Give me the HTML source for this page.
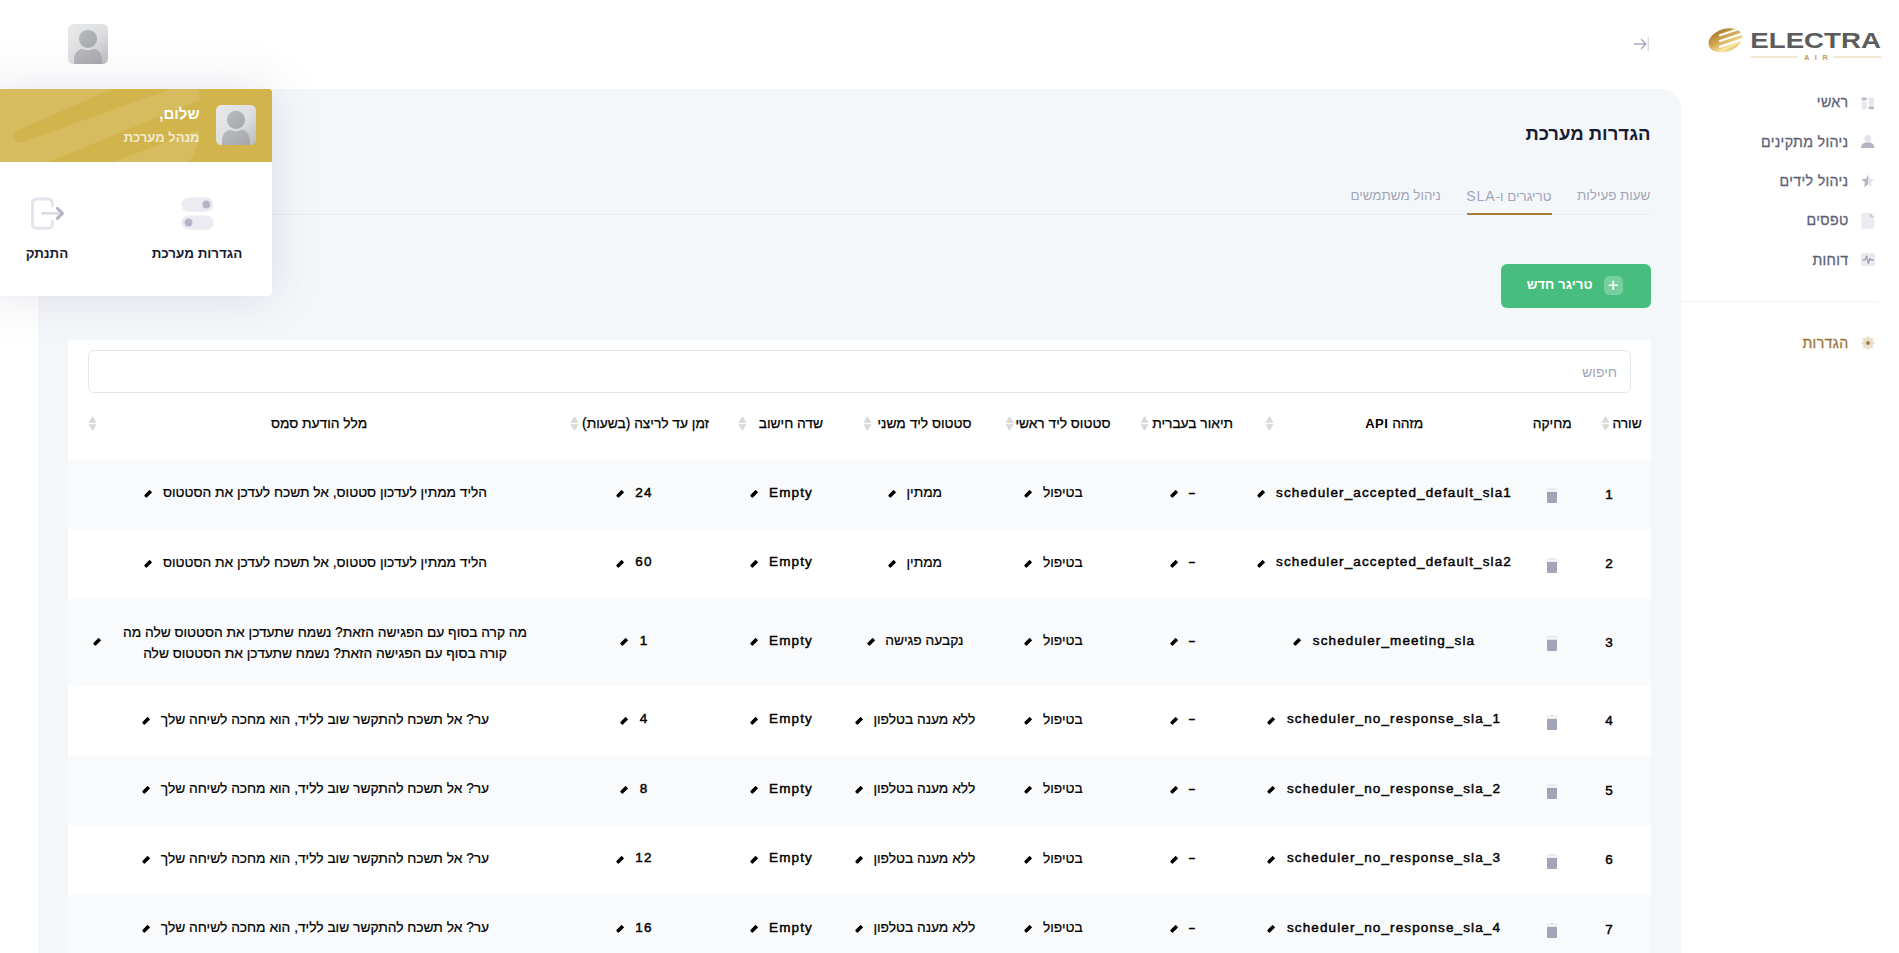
<!DOCTYPE html>
<html lang="he" dir="rtl">
<head>
<meta charset="utf-8">
<title>הגדרות מערכת</title>
<style>
*{box-sizing:border-box;margin:0;padding:0}
html,body{width:1899px;height:953px;overflow:hidden;background:#fff}
body{font-family:"Liberation Sans",sans-serif;font-size:13px;color:#000;position:relative;direction:rtl}
.abs{position:absolute}
.t{position:absolute;white-space:nowrap;line-height:20px;height:20px}
/* content area */
#content{position:absolute;left:38px;top:89px;width:1643px;height:900px;background:#f4f7fa;border-radius:20px 20px 0 0}
#card{position:absolute;left:68px;top:340px;width:1583px;height:640px;background:#fff}
#search{position:absolute;left:88px;top:350px;width:1542.5px;height:42.5px;border:1px solid #e4e6ef;border-radius:6px;background:#fff}
.row{position:absolute;left:68px;width:1583px}
.row.s{background:#f9fafb}
.c{position:absolute;width:500px;white-space:nowrap;line-height:20px;height:20px;color:#000;text-align:center}
.c .tx{position:relative;display:inline-block}
.heb{font-size:13.75px;-webkit-text-stroke:.2px #000}
.lat{font-weight:400;font-size:13.5px;letter-spacing:1.12px;-webkit-text-stroke:.45px #000}
.num{font-weight:400}
.pen{position:absolute;width:8px;height:8px;left:-18.5px;top:7.5px}
.lat .pen{left:-19.5px}
.heb .pen{top:6.9px}
.trash{display:block;width:14px;height:16px}
.sort{position:absolute;width:9px;height:15px;top:416px}
.h{position:absolute;white-space:nowrap;line-height:20px;height:20px;font-size:13.75px;color:#000;top:414px;-webkit-text-stroke:.25px #000}
/* sidebar */
.m{position:absolute;white-space:nowrap;line-height:20px;height:20px;font-size:14.200px;color:#5e6278;right:50.500px;letter-spacing:.35px;-webkit-text-stroke:.3px currentColor}
/* dropdown */
#dd{position:absolute;left:-10px;top:89px;width:282px;height:207px;background:#fff;border-radius:4px;box-shadow:0 0 50px 0 rgba(82,63,105,.15);overflow:hidden}
#ddh{position:absolute;left:0;top:0;width:282px;height:73px;background:#d4b54e;overflow:hidden}
</style>
</head>
<body>

<!-- top header -->
<svg class="abs" style="left:68px;top:24px" width="40" height="40" viewBox="0 0 40 40">
  <defs><linearGradient id="avg" x1="0" y1="0" x2="1" y2="1"><stop offset="0" stop-color="#e8e9eb"/><stop offset=".55" stop-color="#dddee0"/><stop offset="1" stop-color="#babbc0"/></linearGradient>
  <linearGradient id="avb" x1="0" y1="0" x2="1" y2="1"><stop offset="0" stop-color="#b9babe"/><stop offset="1" stop-color="#a6a7ac"/></linearGradient>
  <clipPath id="avc"><rect width="40" height="40" rx="5.500"/></clipPath></defs>
  <g clip-path="url(#avc)"><rect width="40" height="40" fill="url(#avg)"/>
  <circle cx="20" cy="14.800" r="9.100" fill="url(#avb)"/><path d="M6 41v-5c0-7 3.800-10.800 8.800-11.300 1.500 1 3.300 1.500 5.200 1.500s3.700-.5 5.200-1.500c5 .5 8.800 4.300 8.800 11.300v5z" fill="url(#avb)"/></g>
</svg>
<svg class="abs" style="left:1633px;top:36px" width="18" height="16" viewBox="0 0 18 16" fill="none">
  <path d="M1.5 8h11M8.5 3.6l4.4 4.4-4.4 4.4" stroke="#a6a9bb" stroke-width="1.400" stroke-linecap="round" stroke-linejoin="round"/>
  <path d="M15.3 1.5v13" stroke="#dcdde6" stroke-width="1.6" stroke-linecap="round"/>
</svg>

<!-- logo -->
<svg class="abs" style="left:1700px;top:20px;direction:ltr" width="190" height="50" viewBox="1700 20 190 50" direction="ltr">
  <defs><linearGradient id="lg" x1="0.25" y1="0" x2="0.55" y2="1"><stop offset="0" stop-color="#a97a2c"/><stop offset="0.5" stop-color="#d5ad58"/><stop offset="0.85" stop-color="#fbe8a2"/><stop offset="1" stop-color="#e2c06c"/></linearGradient></defs>
  <g transform="translate(1725.400 40.200) rotate(-18.300)">
    <ellipse cx="0" cy="0" rx="17.400" ry="11.300" fill="url(#lg)"/>
    <g stroke="#fff" stroke-width="2.200" stroke-linecap="round" fill="none">
      <path d="M-3.600 -6.400H22"/><path d="M-5.400 -1H22"/><path d="M-7.200 4.600H22"/>
    </g>
  </g>
  <text x="1750.300" y="48" font-family="Liberation Sans, sans-serif" font-weight="700" font-size="21.400" fill="#5c5c5c" textLength="130.700" lengthAdjust="spacingAndGlyphs" direction="ltr" text-anchor="start">ELECTRA</text>
  <rect x="1750.300" y="56.500" width="47.700" height="1" fill="#e6cfa0"/>
  <rect x="1833" y="56.500" width="48" height="1" fill="#e6cfa0"/>
  <text x="1803.900" y="59.700" font-family="Liberation Sans, sans-serif" font-weight="700" font-size="7.500" fill="#c69a48" textLength="23.900" lengthAdjust="spacing" direction="ltr" text-anchor="start">AIR</text>
</svg>

<!-- sidebar menu -->
<div class="m" style="top:91.800px">ראשי</div>
<div class="m" style="top:132px">ניהול מתקינים</div>
<div class="m" style="top:171px">ניהול לידים</div>
<div class="m" style="top:210px">טפסים</div>
<div class="m" style="top:250px">דוחות</div>
<div class="abs" style="left:1681px;top:301px;width:197px;height:1px;background:#eff2f5"></div>
<div class="m" style="top:333px;color:#9c7636">הגדרות</div>


<!-- sidebar icons -->
<svg class="abs" style="left:1861px;top:96.5px" width="14" height="13" viewBox="0 0 14 13">
  <rect x=".7" y=".5" width="5" height="3" rx=".8" fill="#b9b9c9"/>
  <rect x=".7" y="4.5" width="5" height="7.7" rx=".8" fill="#e6e6ee"/>
  <rect x="7.6" y=".5" width="5.4" height="7.7" rx=".8" fill="#e6e6ee"/>
  <rect x="7.6" y="9.3" width="5.4" height="2.9" rx=".8" fill="#b9b9c9"/>
</svg>
<svg class="abs" style="left:1860px;top:134px" width="16" height="16" viewBox="0 0 16 16">
  <circle cx="7.7" cy="4.4" r="3.3" fill="#e4e4ec"/>
  <path d="M1 13.4C1.3 9.9 4 8.2 7.7 8.2s6.4 1.7 6.7 5.2c0 .4-.2.6-.6.6H1.6c-.4 0-.6-.2-.6-.6z" fill="#b5b5c3"/>
</svg>
<svg class="abs" style="left:1860.6px;top:174.4px" width="14" height="14" viewBox="0 0 14 14">
  <path d="M7 .6 8.9 4.8 13.4 5.3 10 8.4 11 12.9 7 10.6z" fill="#e4e4ec"/>
  <path d="M7 .6 5.1 4.8 .6 5.3 4 8.4 3 12.9 7 10.6z" fill="#b5b5c3"/>
</svg>
<svg class="abs" style="left:1861px;top:212.8px" width="14" height="16" viewBox="0 0 14 16">
  <path d="M2.400 0H9l4.300 4.300v9.200c0 1.400-1 2.400-2.400 2.400H2.400C1 15.900.1 14.900.1 13.500V2.400C.1 1 1 0 2.400 0z" fill="#ebebf2"/>
  <path d="M9 0l4.300 4.300H10.200C9.500 4.300 9 3.800 9 3.100z" fill="#c3c3d1"/>
</svg>
<svg class="abs" style="left:1860.800px;top:253.200px" width="14.400" height="13.200" viewBox="0 0 14.400 13.200">
  <rect width="14.400" height="13.200" rx="1.600" fill="#e9e9f0"/>
  <path d="M1.500 6.900H4.300L5.600 3 7.400 10.400 8.900 5.400 9.800 6.900H13" fill="none" stroke="#9a9bb0" stroke-width="1.250" stroke-linejoin="round"/>
</svg>
<svg class="abs" style="left:1860.500px;top:335.800px" width="14" height="14" viewBox="-7 -7 14 14">
  <g fill="#eadfce"><circle r="5"/>
  <g id="tth"><rect x="-1.500" y="-6.700" width="3" height="13.400" rx="1.200"/></g>
  <use href="#tth" transform="rotate(45)"/><use href="#tth" transform="rotate(90)"/><use href="#tth" transform="rotate(135)"/></g>
  <circle r="1.900" fill="#a67c3a"/>
</svg>

<!-- content -->
<div id="content"></div>
<div class="t" style="right:248.5px;top:123px;font-size:18.500px;font-weight:700;color:#181c32;line-height:22px;height:22px">הגדרות מערכת</div>

<div class="abs" style="left:68px;top:213.5px;width:1583px;height:1px;background:#e8ecf0"></div>
<div class="t" style="right:248.600px;top:186.300px;font-size:13.400px;color:#a1a5b7">שעות פעילות</div>
<div class="t" style="right:347.500px;top:186.300px;font-size:13.400px;color:#a1a5b7" dir="rtl">טריגרים ו-<span style="letter-spacing:1px;font-size:14px">SLA</span></div>
<div class="abs" style="left:1467px;top:213px;width:85px;height:2px;background:#a67c3a"></div>
<div class="t" style="right:458.200px;top:186.300px;font-size:13.400px;color:#a1a5b7">ניהול משתמשים</div>

<div class="abs" style="left:1501px;top:264px;width:150px;height:44px;background:#47be7d;border-radius:6px"></div>
<div class="abs" style="left:1604px;top:276px;width:18.5px;height:18.5px;background:#77cf9f;border-radius:5.5px"></div>
<svg class="abs" style="left:1604px;top:276px" width="18.5" height="18.5" viewBox="0 0 18.5 18.5"><path d="M9.25 5.300v7.900M5.300 9.250h7.900" stroke="#fff" stroke-width="1.700" stroke-linecap="round"/></svg>
<div class="t" style="right:306.500px;top:275px;font-size:13.250px;font-weight:700;color:#fff">טריגר חדש</div>

<div id="card"></div>
<div id="search"></div>
<div class="t" style="right:282px;top:361.5px;font-size:14px;color:#a1a5b7">חיפוש</div>

<div id="thead">
<div class="h" style="right:257.3px">שורה</div>
<svg class="sort" style="left:1600.6px" viewBox="0 0 9 15"><path d="M4.5 0 8.6 6.7H.4z" fill="#d9d9d9"/><path d="M4.5 15 8.6 8.3H.4z" fill="#d9d9d9"/></svg>
<div class="h" style="right:327.3px">מחיקה</div>
<div class="h" style="right:475.8px">מזהה <b style="font-size:13px;letter-spacing:.5px;-webkit-text-stroke:0">API</b></div>
<svg class="sort" style="left:1264.9px" viewBox="0 0 9 15"><path d="M4.5 0 8.6 6.7H.4z" fill="#d9d9d9"/><path d="M4.5 15 8.6 8.3H.4z" fill="#d9d9d9"/></svg>
<div class="h" style="right:666px">תיאור בעברית</div>
<svg class="sort" style="left:1139.7px" viewBox="0 0 9 15"><path d="M4.5 0 8.6 6.7H.4z" fill="#d9d9d9"/><path d="M4.5 15 8.6 8.3H.4z" fill="#d9d9d9"/></svg>
<div class="h" style="right:788.6px">סטטוס ליד ראשי</div>
<svg class="sort" style="left:1004.8px" viewBox="0 0 9 15"><path d="M4.5 0 8.6 6.7H.4z" fill="#d9d9d9"/><path d="M4.5 15 8.6 8.3H.4z" fill="#d9d9d9"/></svg>
<div class="h" style="right:927.5px">סטטוס ליד משני</div>
<svg class="sort" style="left:862.9px" viewBox="0 0 9 15"><path d="M4.5 0 8.6 6.7H.4z" fill="#d9d9d9"/><path d="M4.5 15 8.6 8.3H.4z" fill="#d9d9d9"/></svg>
<div class="h" style="right:1076px">שדה חישוב</div>
<svg class="sort" style="left:737.9px" viewBox="0 0 9 15"><path d="M4.5 0 8.6 6.7H.4z" fill="#d9d9d9"/><path d="M4.5 15 8.6 8.3H.4z" fill="#d9d9d9"/></svg>
<div class="h" style="right:1190px">זמן עד לריצה (בשעות)</div>
<svg class="sort" style="left:569.9px" viewBox="0 0 9 15"><path d="M4.5 0 8.6 6.7H.4z" fill="#d9d9d9"/><path d="M4.5 15 8.6 8.3H.4z" fill="#d9d9d9"/></svg>
<div class="h" style="right:1531.9px">מלל הודעת סמס</div>
<svg class="sort" style="left:87.9px" viewBox="0 0 9 15"><path d="M4.5 0 8.6 6.7H.4z" fill="#d9d9d9"/><path d="M4.5 15 8.6 8.3H.4z" fill="#d9d9d9"/></svg>
</div>
<div id="tbody">
<div class="row s" style="top:460px;height:69px"></div>
<div class="c lat num" style="left:1359.5px;top:484.7px"><span class="tx">1</span></div>
<div class="abs" style="left:1545px;top:487px"><svg class="trash" viewBox="0 0 14 16"><rect x="1" y="1.8" width="12" height=".9" fill="#dfe1e8"/><rect x="5.2" y=".7" width="3.6" height="1.2" rx=".6" fill="#e4e6ec"/><path d="M2 4.7h10v10.3a1 1 0 0 1-1 1H3a1 1 0 0 1-1-1z" fill="#a1a5b7"/></svg></div>
<div class="c lat" style="left:1144px;top:482.6px"><span class="tx">scheduler_accepted_default_sla1<svg class="pen" viewBox="0 0 8 8"><path transform="translate(4 4) rotate(-45)" d="M4.100-1.800V1.800H-2.600Q-4 1.800-4 .600V-.600Q-4-1.800-2.600-1.800z" fill="#000"/></svg></span></div>
<div class="c lat" style="left:942.4px;top:482.6px"><span class="tx"><span style="display:inline-block;transform:scaleX(1.6)">-</span><svg class="pen" viewBox="0 0 8 8"><path transform="translate(4 4) rotate(-45)" d="M4.100-1.800V1.800H-2.600Q-4 1.800-4 .600V-.600Q-4-1.800-2.600-1.800z" fill="#000"/></svg></span></div>
<div class="c heb" style="left:812.8px;top:483.2px"><span class="tx">בטיפול<svg class="pen" viewBox="0 0 8 8"><path transform="translate(4 4) rotate(-45)" d="M4.100-1.800V1.800H-2.600Q-4 1.800-4 .600V-.600Q-4-1.800-2.600-1.800z" fill="#000"/></svg></span></div>
<div class="c heb" style="left:674.3px;top:483.2px"><span class="tx">ממתין<svg class="pen" viewBox="0 0 8 8"><path transform="translate(4 4) rotate(-45)" d="M4.100-1.800V1.800H-2.600Q-4 1.800-4 .600V-.600Q-4-1.800-2.600-1.800z" fill="#000"/></svg></span></div>
<div class="c lat" style="left:541px;top:482.6px"><span class="tx">Empty<svg class="pen" viewBox="0 0 8 8"><path transform="translate(4 4) rotate(-45)" d="M4.100-1.800V1.800H-2.600Q-4 1.800-4 .600V-.600Q-4-1.800-2.600-1.800z" fill="#000"/></svg></span></div>
<div class="c lat" style="left:394px;top:482.6px"><span class="tx">24<svg class="pen" viewBox="0 0 8 8"><path transform="translate(4 4) rotate(-45)" d="M4.100-1.800V1.800H-2.600Q-4 1.800-4 .600V-.600Q-4-1.800-2.600-1.800z" fill="#000"/></svg></span></div>
<div class="c heb" style="left:75px;top:483.2px"><span class="tx">הליד ממתין לעדכון סטטוס, אל תשכח לעדכן את הסטטוס<svg class="pen" viewBox="0 0 8 8"><path transform="translate(4 4) rotate(-45)" d="M4.100-1.800V1.800H-2.600Q-4 1.800-4 .600V-.600Q-4-1.800-2.600-1.800z" fill="#000"/></svg></span></div>
<div class="row" style="top:529px;height:70px"></div>
<div class="c lat num" style="left:1359.5px;top:554.2px"><span class="tx">2</span></div>
<div class="abs" style="left:1545px;top:556.5px"><svg class="trash" viewBox="0 0 14 16"><rect x="1" y="1.8" width="12" height=".9" fill="#dfe1e8"/><rect x="5.2" y=".7" width="3.6" height="1.2" rx=".6" fill="#e4e6ec"/><path d="M2 4.7h10v10.3a1 1 0 0 1-1 1H3a1 1 0 0 1-1-1z" fill="#a1a5b7"/></svg></div>
<div class="c lat" style="left:1144px;top:552.1px"><span class="tx">scheduler_accepted_default_sla2<svg class="pen" viewBox="0 0 8 8"><path transform="translate(4 4) rotate(-45)" d="M4.100-1.800V1.800H-2.600Q-4 1.800-4 .600V-.600Q-4-1.800-2.600-1.800z" fill="#000"/></svg></span></div>
<div class="c lat" style="left:942.4px;top:552.1px"><span class="tx"><span style="display:inline-block;transform:scaleX(1.6)">-</span><svg class="pen" viewBox="0 0 8 8"><path transform="translate(4 4) rotate(-45)" d="M4.100-1.800V1.800H-2.600Q-4 1.800-4 .600V-.600Q-4-1.800-2.600-1.800z" fill="#000"/></svg></span></div>
<div class="c heb" style="left:812.8px;top:552.7px"><span class="tx">בטיפול<svg class="pen" viewBox="0 0 8 8"><path transform="translate(4 4) rotate(-45)" d="M4.100-1.800V1.800H-2.600Q-4 1.800-4 .600V-.600Q-4-1.800-2.600-1.800z" fill="#000"/></svg></span></div>
<div class="c heb" style="left:674.3px;top:552.7px"><span class="tx">ממתין<svg class="pen" viewBox="0 0 8 8"><path transform="translate(4 4) rotate(-45)" d="M4.100-1.800V1.800H-2.600Q-4 1.800-4 .600V-.600Q-4-1.800-2.600-1.800z" fill="#000"/></svg></span></div>
<div class="c lat" style="left:541px;top:552.1px"><span class="tx">Empty<svg class="pen" viewBox="0 0 8 8"><path transform="translate(4 4) rotate(-45)" d="M4.100-1.800V1.800H-2.600Q-4 1.800-4 .600V-.600Q-4-1.800-2.600-1.800z" fill="#000"/></svg></span></div>
<div class="c lat" style="left:394px;top:552.1px"><span class="tx">60<svg class="pen" viewBox="0 0 8 8"><path transform="translate(4 4) rotate(-45)" d="M4.100-1.800V1.800H-2.600Q-4 1.800-4 .600V-.600Q-4-1.800-2.600-1.800z" fill="#000"/></svg></span></div>
<div class="c heb" style="left:75px;top:552.7px"><span class="tx">הליד ממתין לעדכון סטטוס, אל תשכח לעדכן את הסטטוס<svg class="pen" viewBox="0 0 8 8"><path transform="translate(4 4) rotate(-45)" d="M4.100-1.800V1.800H-2.600Q-4 1.800-4 .600V-.600Q-4-1.800-2.600-1.800z" fill="#000"/></svg></span></div>
<div class="row s" style="top:599px;height:87px"></div>
<div class="c lat num" style="left:1359.5px;top:632.7px"><span class="tx">3</span></div>
<div class="abs" style="left:1545px;top:635px"><svg class="trash" viewBox="0 0 14 16"><rect x="1" y="1.8" width="12" height=".9" fill="#dfe1e8"/><rect x="5.2" y=".7" width="3.6" height="1.2" rx=".6" fill="#e4e6ec"/><path d="M2 4.7h10v10.3a1 1 0 0 1-1 1H3a1 1 0 0 1-1-1z" fill="#a1a5b7"/></svg></div>
<div class="c lat" style="left:1144px;top:630.6px"><span class="tx">scheduler_meeting_sla<svg class="pen" viewBox="0 0 8 8"><path transform="translate(4 4) rotate(-45)" d="M4.100-1.800V1.800H-2.600Q-4 1.800-4 .600V-.600Q-4-1.800-2.600-1.800z" fill="#000"/></svg></span></div>
<div class="c lat" style="left:942.4px;top:630.6px"><span class="tx"><span style="display:inline-block;transform:scaleX(1.6)">-</span><svg class="pen" viewBox="0 0 8 8"><path transform="translate(4 4) rotate(-45)" d="M4.100-1.800V1.800H-2.600Q-4 1.800-4 .600V-.600Q-4-1.800-2.600-1.800z" fill="#000"/></svg></span></div>
<div class="c heb" style="left:812.8px;top:631.2px"><span class="tx">בטיפול<svg class="pen" viewBox="0 0 8 8"><path transform="translate(4 4) rotate(-45)" d="M4.100-1.800V1.800H-2.600Q-4 1.800-4 .600V-.600Q-4-1.800-2.600-1.800z" fill="#000"/></svg></span></div>
<div class="c heb" style="left:674.3px;top:631.2px"><span class="tx">נקבעה פגישה<svg class="pen" viewBox="0 0 8 8"><path transform="translate(4 4) rotate(-45)" d="M4.100-1.800V1.800H-2.600Q-4 1.800-4 .600V-.600Q-4-1.800-2.600-1.800z" fill="#000"/></svg></span></div>
<div class="c lat" style="left:541px;top:630.6px"><span class="tx">Empty<svg class="pen" viewBox="0 0 8 8"><path transform="translate(4 4) rotate(-45)" d="M4.100-1.800V1.800H-2.600Q-4 1.800-4 .600V-.600Q-4-1.800-2.600-1.800z" fill="#000"/></svg></span></div>
<div class="c lat" style="left:394px;top:630.6px"><span class="tx">1<svg class="pen" viewBox="0 0 8 8"><path transform="translate(4 4) rotate(-45)" d="M4.100-1.800V1.800H-2.600Q-4 1.800-4 .600V-.600Q-4-1.800-2.600-1.800z" fill="#000"/></svg></span></div>
<div class="c heb" style="left:75px;top:622px;height:42px;line-height:21px"><span class="tx" style="display:inline-block">מה קרה בסוף עם הפגישה הזאת? נשמח שתעדכן את הסטטוס שלה מה<br>קורה בסוף עם הפגישה הזאת? נשמח שתעדכן את הסטטוס שלה<svg class="pen" style="top:16.400px;left:-30.200px" viewBox="0 0 8 8"><path transform="translate(4 4) rotate(-45)" d="M4.100-1.800V1.800H-2.600Q-4 1.800-4 .600V-.600Q-4-1.800-2.600-1.800z" fill="#000"/></svg></span></div>
<div class="row" style="top:686px;height:70px"></div>
<div class="c lat num" style="left:1359.5px;top:711.2px"><span class="tx">4</span></div>
<div class="abs" style="left:1545px;top:713.5px"><svg class="trash" viewBox="0 0 14 16"><rect x="1" y="1.8" width="12" height=".9" fill="#dfe1e8"/><rect x="5.2" y=".7" width="3.6" height="1.2" rx=".6" fill="#e4e6ec"/><path d="M2 4.7h10v10.3a1 1 0 0 1-1 1H3a1 1 0 0 1-1-1z" fill="#a1a5b7"/></svg></div>
<div class="c lat" style="left:1144px;top:709.1px"><span class="tx">scheduler_no_response_sla_1<svg class="pen" viewBox="0 0 8 8"><path transform="translate(4 4) rotate(-45)" d="M4.100-1.800V1.800H-2.600Q-4 1.800-4 .600V-.600Q-4-1.800-2.600-1.800z" fill="#000"/></svg></span></div>
<div class="c lat" style="left:942.4px;top:709.1px"><span class="tx"><span style="display:inline-block;transform:scaleX(1.6)">-</span><svg class="pen" viewBox="0 0 8 8"><path transform="translate(4 4) rotate(-45)" d="M4.100-1.800V1.800H-2.600Q-4 1.800-4 .600V-.600Q-4-1.800-2.600-1.800z" fill="#000"/></svg></span></div>
<div class="c heb" style="left:812.8px;top:709.7px"><span class="tx">בטיפול<svg class="pen" viewBox="0 0 8 8"><path transform="translate(4 4) rotate(-45)" d="M4.100-1.800V1.800H-2.600Q-4 1.800-4 .600V-.600Q-4-1.800-2.600-1.800z" fill="#000"/></svg></span></div>
<div class="c heb" style="left:674.3px;top:709.7px"><span class="tx">ללא מענה בטלפון<svg class="pen" viewBox="0 0 8 8"><path transform="translate(4 4) rotate(-45)" d="M4.100-1.800V1.800H-2.600Q-4 1.800-4 .600V-.600Q-4-1.800-2.600-1.800z" fill="#000"/></svg></span></div>
<div class="c lat" style="left:541px;top:709.1px"><span class="tx">Empty<svg class="pen" viewBox="0 0 8 8"><path transform="translate(4 4) rotate(-45)" d="M4.100-1.800V1.800H-2.600Q-4 1.800-4 .600V-.600Q-4-1.800-2.600-1.800z" fill="#000"/></svg></span></div>
<div class="c lat" style="left:394px;top:709.1px"><span class="tx">4<svg class="pen" viewBox="0 0 8 8"><path transform="translate(4 4) rotate(-45)" d="M4.100-1.800V1.800H-2.600Q-4 1.800-4 .600V-.600Q-4-1.800-2.600-1.800z" fill="#000"/></svg></span></div>
<div class="c heb" style="left:75px;top:709.7px"><span class="tx">ער? אל תשכח להתקשר שוב לליד, הוא מחכה לשיחה שלך<svg class="pen" viewBox="0 0 8 8"><path transform="translate(4 4) rotate(-45)" d="M4.100-1.800V1.800H-2.600Q-4 1.800-4 .600V-.600Q-4-1.800-2.600-1.800z" fill="#000"/></svg></span></div>
<div class="row s" style="top:756px;height:69px"></div>
<div class="c lat num" style="left:1359.5px;top:780.7px"><span class="tx">5</span></div>
<div class="abs" style="left:1545px;top:783px"><svg class="trash" viewBox="0 0 14 16"><rect x="1" y="1.8" width="12" height=".9" fill="#dfe1e8"/><rect x="5.2" y=".7" width="3.6" height="1.2" rx=".6" fill="#e4e6ec"/><path d="M2 4.7h10v10.3a1 1 0 0 1-1 1H3a1 1 0 0 1-1-1z" fill="#a1a5b7"/></svg></div>
<div class="c lat" style="left:1144px;top:778.6px"><span class="tx">scheduler_no_response_sla_2<svg class="pen" viewBox="0 0 8 8"><path transform="translate(4 4) rotate(-45)" d="M4.100-1.800V1.800H-2.600Q-4 1.800-4 .600V-.600Q-4-1.800-2.600-1.800z" fill="#000"/></svg></span></div>
<div class="c lat" style="left:942.4px;top:778.6px"><span class="tx"><span style="display:inline-block;transform:scaleX(1.6)">-</span><svg class="pen" viewBox="0 0 8 8"><path transform="translate(4 4) rotate(-45)" d="M4.100-1.800V1.800H-2.600Q-4 1.800-4 .600V-.600Q-4-1.800-2.600-1.800z" fill="#000"/></svg></span></div>
<div class="c heb" style="left:812.8px;top:779.2px"><span class="tx">בטיפול<svg class="pen" viewBox="0 0 8 8"><path transform="translate(4 4) rotate(-45)" d="M4.100-1.800V1.800H-2.600Q-4 1.800-4 .600V-.600Q-4-1.800-2.600-1.800z" fill="#000"/></svg></span></div>
<div class="c heb" style="left:674.3px;top:779.2px"><span class="tx">ללא מענה בטלפון<svg class="pen" viewBox="0 0 8 8"><path transform="translate(4 4) rotate(-45)" d="M4.100-1.800V1.800H-2.600Q-4 1.800-4 .600V-.600Q-4-1.800-2.600-1.800z" fill="#000"/></svg></span></div>
<div class="c lat" style="left:541px;top:778.6px"><span class="tx">Empty<svg class="pen" viewBox="0 0 8 8"><path transform="translate(4 4) rotate(-45)" d="M4.100-1.800V1.800H-2.600Q-4 1.800-4 .600V-.600Q-4-1.800-2.600-1.800z" fill="#000"/></svg></span></div>
<div class="c lat" style="left:394px;top:778.6px"><span class="tx">8<svg class="pen" viewBox="0 0 8 8"><path transform="translate(4 4) rotate(-45)" d="M4.100-1.800V1.800H-2.600Q-4 1.800-4 .600V-.600Q-4-1.800-2.600-1.800z" fill="#000"/></svg></span></div>
<div class="c heb" style="left:75px;top:779.2px"><span class="tx">ער? אל תשכח להתקשר שוב לליד, הוא מחכה לשיחה שלך<svg class="pen" viewBox="0 0 8 8"><path transform="translate(4 4) rotate(-45)" d="M4.100-1.800V1.800H-2.600Q-4 1.800-4 .600V-.600Q-4-1.800-2.600-1.800z" fill="#000"/></svg></span></div>
<div class="row" style="top:825px;height:70px"></div>
<div class="c lat num" style="left:1359.5px;top:850.2px"><span class="tx">6</span></div>
<div class="abs" style="left:1545px;top:852.5px"><svg class="trash" viewBox="0 0 14 16"><rect x="1" y="1.8" width="12" height=".9" fill="#dfe1e8"/><rect x="5.2" y=".7" width="3.6" height="1.2" rx=".6" fill="#e4e6ec"/><path d="M2 4.7h10v10.3a1 1 0 0 1-1 1H3a1 1 0 0 1-1-1z" fill="#a1a5b7"/></svg></div>
<div class="c lat" style="left:1144px;top:848.1px"><span class="tx">scheduler_no_response_sla_3<svg class="pen" viewBox="0 0 8 8"><path transform="translate(4 4) rotate(-45)" d="M4.100-1.800V1.800H-2.600Q-4 1.800-4 .600V-.600Q-4-1.800-2.600-1.800z" fill="#000"/></svg></span></div>
<div class="c lat" style="left:942.4px;top:848.1px"><span class="tx"><span style="display:inline-block;transform:scaleX(1.6)">-</span><svg class="pen" viewBox="0 0 8 8"><path transform="translate(4 4) rotate(-45)" d="M4.100-1.800V1.800H-2.600Q-4 1.800-4 .600V-.600Q-4-1.800-2.600-1.800z" fill="#000"/></svg></span></div>
<div class="c heb" style="left:812.8px;top:848.7px"><span class="tx">בטיפול<svg class="pen" viewBox="0 0 8 8"><path transform="translate(4 4) rotate(-45)" d="M4.100-1.800V1.800H-2.600Q-4 1.800-4 .600V-.600Q-4-1.800-2.600-1.800z" fill="#000"/></svg></span></div>
<div class="c heb" style="left:674.3px;top:848.7px"><span class="tx">ללא מענה בטלפון<svg class="pen" viewBox="0 0 8 8"><path transform="translate(4 4) rotate(-45)" d="M4.100-1.800V1.800H-2.600Q-4 1.800-4 .600V-.600Q-4-1.800-2.600-1.800z" fill="#000"/></svg></span></div>
<div class="c lat" style="left:541px;top:848.1px"><span class="tx">Empty<svg class="pen" viewBox="0 0 8 8"><path transform="translate(4 4) rotate(-45)" d="M4.100-1.800V1.800H-2.600Q-4 1.800-4 .600V-.600Q-4-1.800-2.600-1.800z" fill="#000"/></svg></span></div>
<div class="c lat" style="left:394px;top:848.1px"><span class="tx">12<svg class="pen" viewBox="0 0 8 8"><path transform="translate(4 4) rotate(-45)" d="M4.100-1.800V1.800H-2.600Q-4 1.800-4 .600V-.600Q-4-1.800-2.600-1.800z" fill="#000"/></svg></span></div>
<div class="c heb" style="left:75px;top:848.7px"><span class="tx">ער? אל תשכח להתקשר שוב לליד, הוא מחכה לשיחה שלך<svg class="pen" viewBox="0 0 8 8"><path transform="translate(4 4) rotate(-45)" d="M4.100-1.800V1.800H-2.600Q-4 1.800-4 .600V-.600Q-4-1.800-2.600-1.800z" fill="#000"/></svg></span></div>
<div class="row s" style="top:895px;height:69px"></div>
<div class="c lat num" style="left:1359.5px;top:919.7px"><span class="tx">7</span></div>
<div class="abs" style="left:1545px;top:922px"><svg class="trash" viewBox="0 0 14 16"><rect x="1" y="1.8" width="12" height=".9" fill="#dfe1e8"/><rect x="5.2" y=".7" width="3.6" height="1.2" rx=".6" fill="#e4e6ec"/><path d="M2 4.7h10v10.3a1 1 0 0 1-1 1H3a1 1 0 0 1-1-1z" fill="#a1a5b7"/></svg></div>
<div class="c lat" style="left:1144px;top:917.6px"><span class="tx">scheduler_no_response_sla_4<svg class="pen" viewBox="0 0 8 8"><path transform="translate(4 4) rotate(-45)" d="M4.100-1.800V1.800H-2.600Q-4 1.800-4 .600V-.600Q-4-1.800-2.600-1.800z" fill="#000"/></svg></span></div>
<div class="c lat" style="left:942.4px;top:917.6px"><span class="tx"><span style="display:inline-block;transform:scaleX(1.6)">-</span><svg class="pen" viewBox="0 0 8 8"><path transform="translate(4 4) rotate(-45)" d="M4.100-1.800V1.800H-2.600Q-4 1.800-4 .600V-.600Q-4-1.800-2.600-1.800z" fill="#000"/></svg></span></div>
<div class="c heb" style="left:812.8px;top:918.2px"><span class="tx">בטיפול<svg class="pen" viewBox="0 0 8 8"><path transform="translate(4 4) rotate(-45)" d="M4.100-1.800V1.800H-2.600Q-4 1.800-4 .600V-.600Q-4-1.800-2.600-1.800z" fill="#000"/></svg></span></div>
<div class="c heb" style="left:674.3px;top:918.2px"><span class="tx">ללא מענה בטלפון<svg class="pen" viewBox="0 0 8 8"><path transform="translate(4 4) rotate(-45)" d="M4.100-1.800V1.800H-2.600Q-4 1.800-4 .600V-.600Q-4-1.800-2.600-1.800z" fill="#000"/></svg></span></div>
<div class="c lat" style="left:541px;top:917.6px"><span class="tx">Empty<svg class="pen" viewBox="0 0 8 8"><path transform="translate(4 4) rotate(-45)" d="M4.100-1.800V1.800H-2.600Q-4 1.800-4 .600V-.600Q-4-1.800-2.600-1.800z" fill="#000"/></svg></span></div>
<div class="c lat" style="left:394px;top:917.6px"><span class="tx">16<svg class="pen" viewBox="0 0 8 8"><path transform="translate(4 4) rotate(-45)" d="M4.100-1.800V1.800H-2.600Q-4 1.800-4 .600V-.600Q-4-1.800-2.600-1.800z" fill="#000"/></svg></span></div>
<div class="c heb" style="left:75px;top:918.2px"><span class="tx">ער? אל תשכח להתקשר שוב לליד, הוא מחכה לשיחה שלך<svg class="pen" viewBox="0 0 8 8"><path transform="translate(4 4) rotate(-45)" d="M4.100-1.800V1.800H-2.600Q-4 1.800-4 .600V-.600Q-4-1.800-2.600-1.800z" fill="#000"/></svg></span></div>
</div><!--/tbody-->

<!-- dropdown -->
<div id="dd">
  <div id="ddh">
    <svg class="abs" style="left:0;top:0" width="282" height="73" viewBox="-10 89 282 73">
      <rect x="-10" y="89" width="282" height="73" fill="#d2b44c"/>
      <path d="M-10 80H199.300V128Q199.300 150 188 163H-10z" fill="#ffffff" fill-opacity=".11"/>
      <path d="M113 88.500H172.600L24 141.600Q14.500 145 13.500 138Q13 132.500 19 129.500z" fill="#d2b44c"/>
      <path d="M47.300 162.500 199.500 100V129.500L111.500 162.500z" fill="#d2b44c"/>
    </svg>
    <svg class="abs" style="left:226px;top:16px" width="40" height="40" viewBox="0 0 40 40">
      <defs><clipPath id="avc2"><rect width="40" height="40" rx="5.500"/></clipPath></defs>
      <g clip-path="url(#avc2)"><rect width="40" height="40" fill="url(#avg)"/>
      <circle cx="20" cy="14.800" r="9.100" fill="url(#avb)"/><path d="M6 41v-5c0-7 3.800-10.800 8.800-11.300 1.500 1 3.300 1.500 5.200 1.500s3.700-.5 5.200-1.500c5 .5 8.800 4.300 8.800 11.300v5z" fill="url(#avb)"/></g>
    </svg>
    <div class="t" style="right:72.500px;top:15px;font-size:15px;font-weight:700;color:#fff">שלום,</div>
    <div class="t" style="right:72.500px;top:38.500px;font-size:13px;font-weight:700;color:#fff;opacity:.72">מנהל מערכת</div>
  </div>
  <svg class="abs" style="left:190px;top:107px" width="34" height="34" viewBox="180 196 34 34">
    <rect x="181.400" y="197.400" width="32.200" height="14.300" rx="7.150" fill="#ebebf1"/>
    <rect x="181.400" y="215.400" width="32.200" height="14.300" rx="7.150" fill="#ebebf1"/>
    <circle cx="206.400" cy="204.400" r="3.900" fill="#b5b5c6"/>
    <circle cx="188.500" cy="222.500" r="3.900" fill="#b5b5c6"/>
  </svg>
  <div class="t" style="left:112px;width:190px;text-align:center;top:154.500px;font-size:13.400px;font-weight:700;color:#181c32">הגדרות מערכת</div>
  <svg class="abs" style="left:40px;top:107px" width="36" height="34" viewBox="30 196 36 34" fill="none">
    <path d="M52.300 205.800V202.900C52.300 200.700 50.600 198.900 48.400 198.900H36.400C34.200 198.900 32.500 200.700 32.500 202.900V224.200C32.500 226.400 34.200 228.200 36.400 228.200H48.400C50.600 228.200 52.300 226.400 52.300 224.200V221.300" stroke="#e4e4ec" stroke-width="3" stroke-linecap="round"/>
    <path d="M42.500 213.400H58" stroke="#dcdce6" stroke-width="2.800" stroke-linecap="round"/>
    <path d="M57.400 208.400 62.400 213.400 57.400 218.400" stroke="#b5b5c6" stroke-width="3.100" stroke-linecap="round" stroke-linejoin="round"/>
  </svg>
  <div class="t" style="left:-3px;width:120px;text-align:center;top:154.500px;font-size:13.400px;font-weight:700;color:#181c32">התנתק</div>
</div>

</body>
</html>
